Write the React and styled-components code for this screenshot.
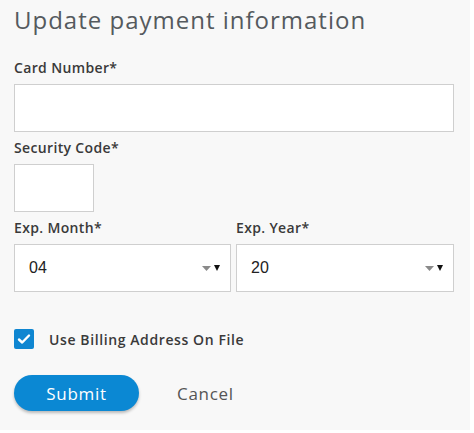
import React from 'react'
import styled, { createGlobalStyle } from 'styled-components'

const Global = createGlobalStyle`
  html, body { margin: 0; padding: 0; background: #fff; }
  body { font-family: "Open Sans", "DejaVu Sans", sans-serif; }
`;

const Panel = styled.div`
  width: 470px;
  height: 430px;
  box-sizing: border-box;
  background: #f8f8f8;
  padding: 4px 16px 0 14px;
  display: flex;
  flex-direction: column;
`;

const Title = styled.h1`
  margin: 0;
  font-size: 24px;
  font-weight: 400;
  color: #555a5e;
  letter-spacing: 1px;
  line-height: 32px;
`;

const Field = styled.div`
  display: flex;
  flex-direction: column;
  margin-top: ${(p) => p.$top || 7}px;
`;

const Label = styled.label`
  font-size: 14px;
  font-weight: 600;
  color: #3a3a3a;
  line-height: 18px;
  margin-bottom: 7px;
  letter-spacing: 0.35px;
`;

const Input = styled.input`
  box-sizing: border-box;
  width: ${(p) => p.$w || 440}px;
  height: 48px;
  border: 1px solid #cfcfcf;
  background: #fff;
  outline: none;
`;

const Row = styled.div`
  display: flex;
  gap: 5px;
`;

const SelectBox = styled.div`
  box-sizing: border-box;
  width: ${(p) => p.$w}px;
  height: 48px;
  border: 1px solid #cfcfcf;
  background: #fff;
  display: flex;
  align-items: center;
  padding: 0 10px 0 14px;
  font-family: "Liberation Sans", Arial, sans-serif;
  font-size: 16px;
  color: #222;
`;

const Value = styled.span`
  flex: 1;
`;

const Arrows = styled.span`
  display: flex;
  align-items: center;
  gap: 3px;
`;

const Check = styled.span`
  width: 20px;
  height: 20px;
  border-radius: 2px;
  background: #0f86d1;
  display: flex;
  align-items: center;
  justify-content: center;
`;

const CheckRow = styled.div`
  display: flex;
  align-items: center;
  gap: 15px;
  margin-top: 37px;
  font-size: 14px;
  font-weight: 600;
  color: #3a3a3a;
  letter-spacing: 0.6px;
`;

const Actions = styled.div`
  display: flex;
  align-items: center;
  gap: 38px;
  margin-top: 26px;
`;

const Submit = styled.button`
  width: 125px;
  height: 36px;
  border: none;
  border-radius: 18px;
  background: #0b88d3;
  color: #fff;
  font-family: inherit;
  font-size: 17px;
  letter-spacing: 0.7px;
  box-shadow: 0 2px 3px rgba(0, 0, 0, 0.25);
`;

const Cancel = styled.button`
  border: none;
  background: none;
  padding: 0;
  font-family: inherit;
  font-size: 17px;
  color: #555;
  letter-spacing: 0.7px;
`;

const Select = ({ value, width }) => (
  <SelectBox $w={width}>
    <Value>{value}</Value>
    <Arrows>
      <svg width="9" height="5" viewBox="0 0 9 5"><path d="M0 0h9L4.5 5z" fill="#8a8a8a" /></svg>
      <svg width="6" height="6" viewBox="0 0 6 6"><path d="M0 0h6L3 6z" fill="#111" /></svg>
    </Arrows>
  </SelectBox>
);

export default function App() {
  return (
    <>
      <Global />
      <Panel>
        <Title>Update payment information</Title>
        <Field $top={23}>
          <Label>Card Number*</Label>
          <Input />
        </Field>
        <Field>
          <Label>Security Code*</Label>
          <Input $w={80} />
        </Field>
        <Row>
          <Field>
            <Label>Exp. Month*</Label>
            <Select value="04" width={217} />
          </Field>
          <Field>
            <Label>Exp. Year*</Label>
            <Select value="20" width={218} />
          </Field>
        </Row>
        <CheckRow>
          <Check>
            <svg width="14" height="12" viewBox="0 0 14 12">
              <path d="M2 6.5l3.2 3L12 2.5" stroke="#fff" strokeWidth="2.4" fill="none" strokeLinecap="round" strokeLinejoin="round" />
            </svg>
          </Check>
          Use Billing Address On File
        </CheckRow>
        <Actions>
          <Submit>Submit</Submit>
          <Cancel>Cancel</Cancel>
        </Actions>
      </Panel>
    </>
  );
}
